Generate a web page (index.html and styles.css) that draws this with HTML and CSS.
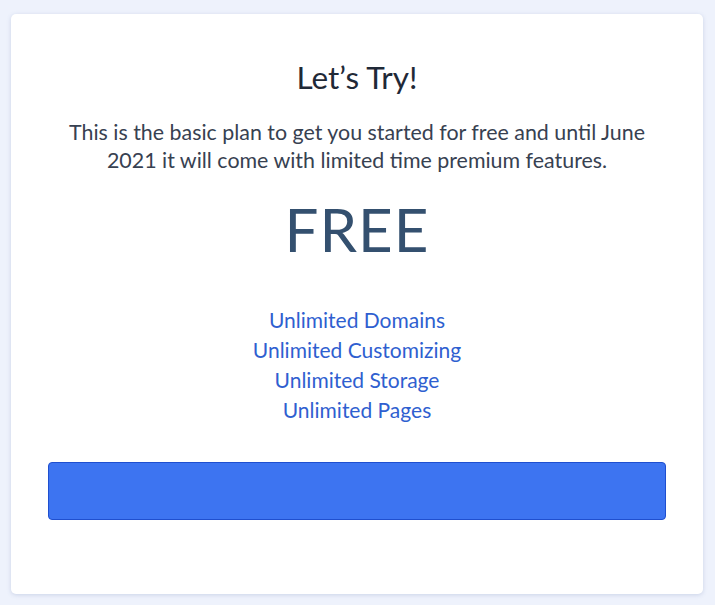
FILE: index.html
```html
<!DOCTYPE html>
<html>
<head>
<meta charset="utf-8">
<link rel="stylesheet" href="styles.css">
</head>
<body>
<div class="card">
  <h2 class="title">Let’s Try!</h2>
  <p class="desc">This is the basic plan to get you started for free and until June 2021 it will come with limited time premium features.</p>
  <div class="price">FREE</div>
  <ul class="features">
    <li>Unlimited Domains</li>
    <li>Unlimited Customizing</li>
    <li>Unlimited Storage</li>
    <li>Unlimited Pages</li>
  </ul>
  <button class="cta" type="button"></button>
</div>
</body>
</html>
```
FILE: styles.css
```css
html, body {
  margin: 0;
  padding: 0;
  background: #eef2fc;
}
body {
  padding: 14px 12px 11px 11px;
  font-family: Lato, "Noto Sans", sans-serif;
}
.card {
  background: #ffffff;
  border-radius: 5px;
  box-shadow: 0 1px 4px rgba(100, 120, 170, 0.25);
  height: 580px;
  box-sizing: border-box;
  padding: 45px 37px 0 37px;
  text-align: center;
}
.title {
  margin: 0;
  font-size: 31.5px;
  font-weight: 400;
  line-height: 36px;
  color: #1f2937;
}
.desc {
  margin: 23px 10px 0;
  font-size: 21.4px;
  line-height: 28px;
  color: #374151;
}
.price {
  margin-top: 15px;
  font-size: 60px;
  line-height: 80px;
  color: #34506f;
  letter-spacing: 1px;
}
.features {
  list-style: none;
  margin: 36px 0 0;
  padding: 0;
  font-size: 21px;
  line-height: 30px;
  color: #2f5fd0;
}
.cta {
  display: block;
  width: 100%;
  height: 58px;
  margin-top: 37px;
  background: #3d74f1;
  border: 1px solid #1f4fcf;
  border-radius: 4px;
}
```
